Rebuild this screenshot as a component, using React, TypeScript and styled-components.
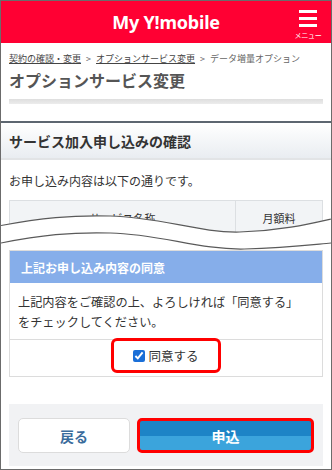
import React from "react";
import styled, { createGlobalStyle } from "styled-components";

const GlobalStyle = createGlobalStyle`
  body {
    margin: 0;
    background: #fff;
    font-family: "Noto Sans CJK JP", "Noto Sans", sans-serif;
    color: #333;
  }
`;

export default function App() {
  return (
    <Frame>
      <GlobalStyle />
      <TopBar>
        <span />
        <Brand>My Y!mobile</Brand>
        <MenuButton>
          <Burger>
            <i />
            <i />
            <i />
          </Burger>
          <MenuLabel>メニュー</MenuLabel>
        </MenuButton>
      </TopBar>

      <PageHead>
        <Crumbs>
          <CrumbLink>契約の確認・変更</CrumbLink>
          <Sep>&gt;</Sep>
          <CrumbLink>オプションサービス変更</CrumbLink>
          <Sep>&gt;</Sep>
          <span>データ増量オプション</span>
        </Crumbs>
        <PageTitle>オプションサービス変更</PageTitle>
        <Progress />
      </PageHead>

      <SectionHead>サービス加入申し込みの確認</SectionHead>
      <Intro>お申し込み内容は以下の通りです。</Intro>

      <CutTable>
        <Table>
          <thead>
            <tr>
              <Th wide>サービス名称</Th>
              <Th>月額料</Th>
            </tr>
          </thead>
        </Table>
        <Wave viewBox="0 0 332 45" preserveAspectRatio="none">
          <path
            d="M0 20.5 C40 13 70 10 110 11 C160 12 200 28 240 27 C280 26 310 19 332 14 L332 45 L0 45 Z"
            fill="#fff"
          />
          <path
            d="M0 20.5 C40 13 70 10 110 11 C160 12 200 28 240 27 C280 26 310 19 332 14"
            fill="none"
            stroke="#5a5a5a"
            strokeWidth="1.2"
          />
          <path
            d="M0 38 C40 30 70 27 110 28 C160 29 200 45 245 44 C285 43 310 40 332 38"
            fill="none"
            stroke="#5a5a5a"
            strokeWidth="1.2"
          />
        </Wave>
      </CutTable>

      <ConsentBox>
        <ConsentHead>上記お申し込み内容の同意</ConsentHead>
        <ConsentText>
          上記内容をご確認の上、よろしければ「同意する」
          <br />
          をチェックしてください。
        </ConsentText>
        <CheckRow>
          <Highlight>
            <Check type="checkbox" checked readOnly />
            同意する
          </Highlight>
        </CheckRow>
      </ConsentBox>

      <Footer>
        <Button>戻る</Button>
        <Button primary>申込</Button>
      </Footer>
    </Frame>
  );
}

const Frame = styled.div`
  width: 332px;
  height: 470px;
  box-sizing: border-box;
  border: 1px solid #6b6b6b;
  overflow: hidden;
  background: #fff;
`;

const TopBar = styled.header`
  height: 42px;
  background: #ff0033;
  display: grid;
  grid-template-columns: 1fr auto 1fr;
  align-items: center;
  color: #fff;
`;

const Brand = styled.div`
  font-family: "Noto Sans", "Open Sans", sans-serif;
  font-weight: 700;
  font-size: 18px;
  letter-spacing: -0.2px;
  margin-top: -1px;
`;

const MenuButton = styled.div`
  justify-self: end;
  margin-right: 8px;
  width: 30px;
  height: 42px;
  display: flex;
  flex-direction: column;
  align-items: center;
  padding-top: 9px;
  box-sizing: border-box;
`;

const Burger = styled.div`
  width: 18px;
  display: flex;
  flex-direction: column;
  gap: 4.5px;
  i {
    display: block;
    height: 2.5px;
    background: #fff;
  }
`;

const MenuLabel = styled.span`
  font-size: 7px;
  line-height: 9px;
  margin-top: 4px;
  letter-spacing: -0.3px;
  white-space: nowrap;
`;

const PageHead = styled.div`
  padding: 9px 8px 0;
`;

const Crumbs = styled.div`
  font-size: 9px;
  line-height: 14px;
  color: #666;
  white-space: nowrap;
`;

const CrumbLink = styled.span`
  color: #444;
  text-decoration: underline;
`;

const Sep = styled.span`
  margin: 0 5px;
  color: #666;
`;

const PageTitle = styled.h1`
  margin: 2px 0 0;
  font-size: 16px;
  line-height: 24px;
  font-weight: 700;
  color: #555;
`;

const Progress = styled.div`
  margin-top: 7px;
  height: 5px;
  background: linear-gradient(#dedede, #ececec);
`;

const SectionHead = styled.h2`
  margin: 17px 0 0;
  border-top: 2px solid #5c6670;
  height: 35px;
  border-bottom: 2px solid #e2e4e6;
  background: linear-gradient(#fff, #e9edf1);
  display: flex;
  align-items: center;
  padding: 0 8px;
  font-size: 14px;
  font-weight: 700;
  color: #333;
`;

const Intro = styled.p`
  margin: 12px 8px 0;
  font-size: 12px;
  line-height: 18px;
`;

const CutTable = styled.div`
  position: relative;
  height: 50px;
  margin: 10px 0 0;
  padding: 0 8px;
  overflow: hidden;
`;

const Table = styled.table`
  width: 100%;
  border-collapse: collapse;
  table-layout: fixed;
`;

const Th = styled.th<{ wide?: boolean }>`
  width: ${({ wide }) => (wide ? "225px" : "auto")};
  height: 34px;
  padding: 0;
  background: #f2f4f6;
  border: 1px solid #dcdfe2;
  font-size: 11px;
  font-weight: 400;
  color: #333;
`;

const Wave = styled.svg`
  position: absolute;
  left: 0;
  top: 5px;
  width: 330px;
  height: 45px;
`;

const ConsentBox = styled.section`
  margin: 0 8px;
  border: 1px solid #dcdcdc;
`;

const ConsentHead = styled.div`
  height: 32px;
  background: #86aeea;
  color: #fff;
  font-size: 12px;
  font-weight: 700;
  display: flex;
  align-items: center;
  padding-left: 11px;
`;

const ConsentText = styled.p`
  margin: 0;
  padding: 9px 8px 7px;
  font-size: 12.2px;
  line-height: 20px;
  border-bottom: 1px solid #dcdcdc;
  white-space: nowrap;
`;

const CheckRow = styled.div`
  height: 36px;
  display: flex;
  justify-content: center;
`;

const Highlight = styled.label`
  margin-top: -2px;
  width: 110px;
  height: 35px;
  box-sizing: border-box;
  border: 3px solid #ff0000;
  border-radius: 6px;
  display: flex;
  align-items: center;
  justify-content: center;
  gap: 3px;
  font-size: 12.5px;
  color: #333;
`;

const Check = styled.input`
  width: 12px;
  height: 12px;
  margin: 0;
  accent-color: #1a6fd8;
`;

const Footer = styled.div`
  margin: 27px 8px 0;
  height: 62px;
  background: #f1f2f4;
  display: flex;
  gap: 7px;
  padding: 14px 9px 0;
  box-sizing: border-box;
`;

const Button = styled.button<{ primary?: boolean }>`
  height: 35px;
  box-sizing: border-box;
  border-radius: 5px;
  font-family: "Noto Sans CJK JP", sans-serif;
  font-size: 14px;
  font-weight: 700;
  display: flex;
  align-items: center;
  justify-content: center;
  padding: 0;
  flex: ${({ primary }) => (primary ? "0 0 177px" : "0 0 112px")};
  color: ${({ primary }) => (primary ? "#fff" : "#3a6c9c")};
  border: ${({ primary }) => (primary ? "3px solid #ff0000" : "1px solid #dcdcdc")};
  background: ${({ primary }) =>
    primary ? "linear-gradient(#1d84c6 0 50%, #3ba4dc 50% 100%)" : "#fff"};
`;
